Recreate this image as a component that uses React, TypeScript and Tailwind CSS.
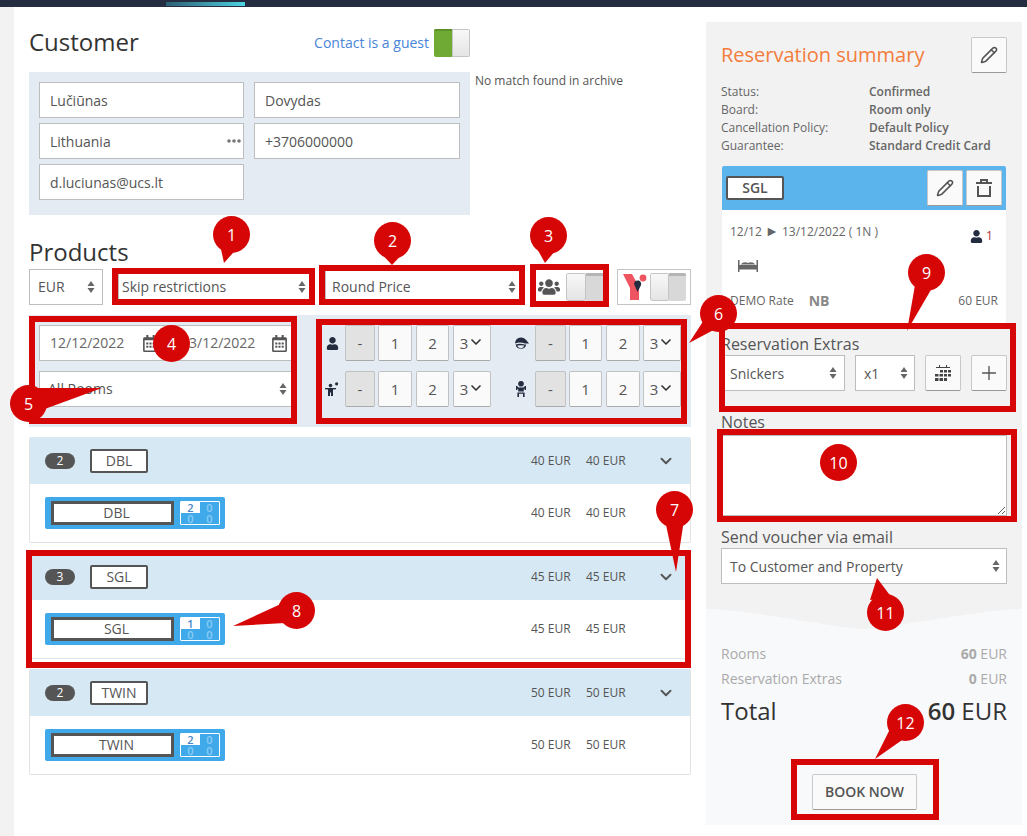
import React from 'react'
import {Pencil, Plus, ChevronDown} from 'lucide-react'
import {FaRegCalendarAlt, FaUser, FaUsers} from 'react-icons/fa'

const Arrows = () => (
    <svg width="8" height="14" viewBox="0 0 8 14" className="shrink-0 fill-[#666] -mt-px">
        <path d="M4 1 L7.5 6 H0.5 Z"/>
        <path d="M4 13 L7.5 8 H0.5 Z"/>
    </svg>
)

const Field = ({text}: {text: string}) => (
    <div className="h-9 bg-white border border-[#bdbdbd] pl-[10px] pt-px flex items-center text-sm text-[#555]">{text}</div>
)

const Select = ({text, className = ''}: {text: string; className?: string}) => (
    <div className={`h-9 bg-white border border-[#bdbdbd] flex items-center justify-between text-sm text-[#555] ${className}`}>
        <span>{text}</span>
        <Arrows/>
    </div>
)

const Toggle = ({className = ''}: {className?: string}) => (
    <div className={`h-[28px] flex rounded-[2px] overflow-hidden ${className}`}>
        <div className="flex-1 bg-gradient-to-b from-[#f8f8f8] to-[#e4e4e4] border border-[#c4c4c4] rounded-[2px]"/>
        <div className="flex-1 bg-[#d8d8d8] border-t-[3px] border-[#b5b5b5]"/>
    </div>
)

const CountButton = ({text, className = '', chevron = false}: {text: string; className?: string; chevron?: boolean}) => (
    <div className={`h-9 border border-[#c2c2c2] border-b-[#aaa] rounded-[2px] flex items-center justify-center text-[15px] text-[#555] ${className}`}>
        {text}
        {chevron && <ChevronDown size={16} strokeWidth={2.5} className="text-[#333] -mt-[2px]"/>}
    </div>
)

const CountRow = ({icon, wide = false}: {icon: React.ReactNode; wide?: boolean}) => (
    <div className="flex items-center">
        <div className={`w-[18px] flex justify-center ${wide ? 'mr-[5px]' : 'mr-[4px]'}`}>{icon}</div>
        <CountButton text="-" className={`bg-[#e2e2e2] border-[#aaa] ${wide ? 'w-[31px]' : 'w-[30px]'}`}/>
        <CountButton text="1" className={`bg-[#fafafa] ml-[3px] ${wide ? 'w-[33px]' : 'w-[34px]'}`}/>
        <CountButton text="2" className={`bg-[#fafafa] ml-[4px] ${wide ? 'w-[34px]' : 'w-[33px]'}`}/>
        <CountButton text="3" chevron className={`bg-[#fafafa] w-[38px] ${wide ? 'ml-[3px]' : 'ml-[4px]'}`}/>
    </div>
)

const CapIcon = () => (
    <svg width="15" height="15" viewBox="0 0 15 15" className="fill-[#232d3f]">
        <path d="M1 7.4 A6.2 6.2 0 0 1 12.2 4 L15 7.4 H11 Q6 5.6 1 7.4 Z"/>
        <path d="M1.6 8.4 Q6 7 10.6 8.4 L12.2 8.4 A5.4 5.4 0 0 1 1.6 8.4 Z M3.2 9.6 A3.8 3.8 0 0 0 10.4 9.6 Q6.8 8.8 3.2 9.6 Z" fillRule="evenodd"/>
    </svg>
)

const ChildIcon = () => (
    <svg width="14" height="14" viewBox="0 0 14 14" className="fill-[#232d3f]">
        <circle cx="5.5" cy="3.6" r="1.8"/>
        <circle cx="11.6" cy="1.8" r="1.6"/>
        <path d="M0 6 H11 V7.2 L8 7.6 V14 H6 V10.6 H5 V14 H3 V7.6 L0 7.2 Z"/>
    </svg>
)

const BabyIcon = () => (
    <svg width="10" height="16" viewBox="0 0 10 16" className="fill-[#232d3f]">
        <circle cx="5" cy="2.8" r="2.8"/>
        <path d="M0 5 L1 5 L2.6 6.4 H7.4 L9 5 L10 5 L10 9 H8.6 V7.6 L7.8 8 V10.6 H2.2 V8 L1.4 7.6 V9 H0 Z"/>
        <path d="M1.4 11.4 H8.6 V16 H7 V12.8 H3 V16 H1.4 Z"/>
    </svg>
)

const BedIcon = () => (
    <svg width="20" height="12" viewBox="0 0 20 12" className="block fill-[#666]">
        <path d="M0 0 H1.5 V5 H18.5 V0 H20 V12 H18.5 V9.5 H1.5 V12 H0 Z"/>
        <path d="M2.5 4.4 Q6 1.2 10 3 Q14 1.2 17.5 4.4 Z"/>
    </svg>
)

const TrashIcon = () => (
    <svg width="20" height="20" viewBox="0 0 20 20" fill="none" stroke="#555" strokeWidth="2">
        <path d="M2 5 H18"/>
        <path d="M7 5 V2 H13 V5"/>
        <path d="M4 8 V18 H16 V8"/>
    </svg>
)

const GridCalendarIcon = () => (
    <svg width="16" height="16" viewBox="0 0 16 16" className="fill-[#444]">
        <path d="M4 0 H5 V2 H11 V0 H12 V2 H15 V3 H1 V2 H4 Z"/>
        <path d="M5 5 H8 V7.5 H5 Z M9 5 H12 V7.5 H9 Z M13 5 H16 V7.5 H13 Z M0 9 H3.5 V11.5 H0 Z M4.5 9 H8 V11.5 H4.5 Z M9 9 H12 V11.5 H9 Z M13 9 H16 V11.5 H13 Z M0 13 H3.5 V16 H0 Z M4.5 13 H8 V16 H4.5 Z M9 13 H12 V16 H9 Z"/>
    </svg>
)

const YieldLogo = () => (
    <svg width="24" height="28" viewBox="0 0 24 28" className="shrink-0">
        <path d="M0 1 H9 L14 10 L16 14 V27 H7 V15 Z" fill="#ef5560"/>
        <path d="M11 11 A3.6 3.6 0 1 1 17.6 13 L14.5 19 Z" fill="#232d3f"/>
        <circle cx="20" cy="5" r="3.4" fill="#ef5560"/>
    </svg>
)

const RoomGroup = ({count, code, price, guests}: {count: string; code: string; price: string; guests: string}) => (
    <div className="h-[106px] border border-[#e3e3e3] border-t-0 rounded-[2px]">
        <div className="h-[47px] bg-[#d5e8f4] pl-[15px] pr-[15px] flex items-center text-xs text-[#555]">
            <div className="w-[30px] h-4 rounded-full bg-[#555] text-white flex items-center justify-center">{count}</div>
            <div className="w-[58px] h-6 ml-[15px] bg-white border-2 border-[#555] rounded-[2px] flex items-center justify-center text-sm">{code}</div>
            <div className="ml-auto w-10">{price} EUR</div>
            <div className="w-10 ml-[15px]">{price} EUR</div>
            <ChevronDown size={18} strokeWidth={2.5} className="ml-[31px] text-[#555]"/>
        </div>
        <div className="h-[58px] pl-[15px] pr-[15px] flex items-center text-xs text-[#555]">
            <div className="w-[180px] h-8 bg-[#3fa9ea] rounded-[2px] flex items-center pl-[6px]">
                <div className="w-[123px] h-6 bg-white border-[3px] border-[#555] pl-[8px] flex items-center justify-center text-sm">{code}</div>
                <div className="w-10 h-6 ml-[6px] border border-white rounded-[1px] grid grid-cols-2 grid-rows-2 text-[11px] leading-[11px] font-semibold text-[#8ccbf3]">
                    <div className="bg-white text-[#4a86c8] flex items-center justify-center">{guests}</div>
                    <div className="flex items-center justify-center">0</div>
                    <div className="flex items-center justify-center">0</div>
                    <div className="flex items-center justify-center">0</div>
                </div>
            </div>
            <div className="ml-auto w-10">{price} EUR</div>
            <div className="w-10 ml-[15px] mr-[49px]">{price} EUR</div>
        </div>
    </div>
)

const SummaryRow = ({label, value}: {label: string; value: string}) => (
    <div className="flex h-[18px] items-center text-xs text-[#666]">
        <div className="w-[148px]">{label}</div>
        <div className="font-semibold">{value}</div>
    </div>
)

const IconButton = ({children, className = ''}: {children: React.ReactNode; className?: string}) => (
    <div className={`w-9 h-9 bg-[#fafafa] border border-[#c8c8c8] border-b-[#999] rounded-[2px] flex items-center justify-center text-[#555] ${className}`}>{children}</div>
)

const boxes = [
    'left-[112px] top-[268px] w-[203px] h-[37px]',
    'left-[319px] top-[265px] w-[206px] h-[40px]',
    'left-[530px] top-[264px] w-[79px] h-[43px]',
    'left-[29px] top-[316px] w-[268px] h-[108px]',
    'left-[316px] top-[319px] w-[371px] h-[105px]',
    'left-[26px] top-[550px] w-[665px] h-[118px]',
    'left-[719px] top-[323px] w-[297px] h-[89px]',
    'left-[717px] top-[429px] w-[300px] h-[93px]',
    'left-[791px] top-[759px] w-[148px] h-[61px]',
]

const markers = [
    {n: '1', pos: 'left-[213px] top-[216px]', tail: '219,240 240,245 224,263'},
    {n: '2', pos: 'left-[374px] top-[222px]', tail: '378,250 406,250 392,265'},
    {n: '3', pos: 'left-[530px] top-[217px]', tail: '535,245 560,245 545,263'},
    {n: '4', pos: 'left-[153px] top-[325px]', tail: ''},
    {n: '5', pos: 'left-[10px] top-[385px]', tail: '30,388 42,410 102,388'},
    {n: '6', pos: 'left-[700px] top-[295px]', tail: '704,320 723,325 689,343'},
    {n: '7', pos: 'left-[656px] top-[491px]', tail: '665,520 684,520 676,572'},
    {n: '8', pos: 'left-[278px] top-[592px]', tail: '283,603 285,623 233,626'},
    {n: '9', pos: 'left-[908px] top-[254px]', tail: '915,285 932,288 907,331'},
    {n: '10', pos: 'left-[820px] top-[444px]', tail: ''},
    {n: '11', pos: 'left-[867px] top-[594px]', tail: '870,600 892,598 877,578'},
    {n: '12', pos: 'left-[887px] top-[704px]', tail: '892,725 905,738 875,759'},
]

const App = () => {
    return (
        <div className="relative w-[1027px] h-[836px] overflow-hidden bg-white font-['Open_Sans',sans-serif] text-[#333]">
            <div className="h-[7px] bg-[#232d3f] pt-[2px]">
                <div className="ml-[166px] w-[79px] h-1 bg-gradient-to-r from-[#2c5f74] to-[#4dd4e4]"/>
            </div>

            <div className="flex h-[829px]">
                <div className="w-[14px] bg-[#f2f2f2]"/>

                <main className="w-[677px] pl-[15px]">
                    <div className="w-[441px] h-8 mt-[20px] flex items-center">
                        <h1 className="text-2xl -mt-[2px]">Customer</h1>
                        <span className="ml-auto text-sm text-[#4a86d8]">Contact is a guest</span>
                        <div className="w-9 h-7 ml-[5px] flex rounded-[2px] overflow-hidden">
                            <div className="w-[18px] bg-[#6fab34] border-t-2 border-[#5d9229]"/>
                            <div className="w-[18px] bg-gradient-to-b from-[#f8f8f8] to-[#e4e4e4] border border-[#c4c4c4]"/>
                        </div>
                    </div>

                    <div className="flex mt-[13px]">
                        <div className="w-[441px] h-[143px] bg-[#e4ebf3] p-[10px] grid grid-cols-[205px_206px] gap-x-[10px] gap-y-[5px] content-start">
                            <Field text="Lučiūnas"/>
                            <Field text="Dovydas"/>
                            <div className="relative">
                                <Field text="Lithuania"/>
                                <svg width="14" height="4" viewBox="0 0 14 4" className="absolute right-[3px] top-[16px] fill-[#777]">
                                    <circle cx="2" cy="2" r="1.8"/>
                                    <circle cx="7" cy="2" r="1.8"/>
                                    <circle cx="12" cy="2" r="1.8"/>
                                </svg>
                            </div>
                            <Field text="+3706000000"/>
                            <Field text="d.luciunas@ucs.lt"/>
                        </div>
                        <div className="ml-[5px] text-xs leading-[18px] text-[#555]">No match found in archive</div>
                    </div>

                    <h2 className="text-2xl mt-[21px]">Products</h2>
                    <div className="flex mt-px">
                        <Select text="EUR" className="w-[74px] pl-[8px] pr-[7px]"/>
                        <Select text="Skip restrictions" className="w-[195px] ml-[15px] pl-[3px] pr-[6px]"/>
                        <Select text="Round Price" className="w-[198px] ml-[12px] pl-[6px] pr-[6px]"/>
                        <div className="flex items-center ml-[15px]">
                            <FaUsers size={22} className="text-[#555]"/>
                            <Toggle className="w-[38px] ml-[6px]"/>
                        </div>
                        <div className="ml-[13px] w-[74px] h-9 border border-[#c4c4c4] flex items-center pl-[5px] gap-[3px]">
                            <YieldLogo/>
                            <Toggle className="w-[36px]"/>
                        </div>
                    </div>

                    <div className="w-[662px] h-[112px] mt-[10px] bg-[#e4ebf3] p-[10px] flex">
                        <div className="w-[253px] flex flex-col gap-[10px]">
                            <div className="h-9 bg-white border border-[#bdbdbd] flex items-center text-sm text-[#666] pl-[10px]">
                                <span className="w-[92px]">12/12/2022</span>
                                <FaRegCalendarAlt size={17} className="text-[#555]"/>
                                <span className="w-[94px] ml-[22px]">13/12/2022</span>
                                <FaRegCalendarAlt size={17} className="text-[#555] ml-[-4px]"/>
                            </div>
                            <Select text="All Rooms" className="pl-[8px] pr-[4px]"/>
                        </div>
                        <div className="ml-[31px] flex flex-col gap-[10px]">
                            <div className="flex gap-[21px]">
                                <CountRow icon={<FaUser size={13} className="text-[#232d3f]"/>}/>
                                <CountRow wide icon={<CapIcon/>}/>
                            </div>
                            <div className="flex gap-[21px]">
                                <CountRow icon={<ChildIcon/>}/>
                                <CountRow wide icon={<BabyIcon/>}/>
                            </div>
                        </div>
                    </div>

                    <div className="w-[662px] mt-[10px] flex flex-col gap-[10px]">
                        <RoomGroup count="2" code="DBL" price="40" guests="2"/>
                        <RoomGroup count="3" code="SGL" price="45" guests="1"/>
                        <RoomGroup count="2" code="TWIN" price="50" guests="2"/>
                    </div>
                </main>

                <aside className="w-[316px] h-[803px] ml-[15px] mt-[15px] bg-[#f8f9fb]">
                    <div className="h-[587px] bg-[#f2f2f2] px-[15px] pt-[15px]">
                        <div className="flex items-center justify-between">
                            <h2 className="text-xl text-[#f47c3c]">Reservation summary</h2>
                            <IconButton><Pencil size={18}/></IconButton>
                        </div>
                        <div className="mt-[10px]">
                            <SummaryRow label="Status:" value="Confirmed"/>
                            <SummaryRow label="Board:" value="Room only"/>
                            <SummaryRow label="Cancellation Policy:" value="Default Policy"/>
                            <SummaryRow label="Guarantee:" value="Standard Credit Card"/>
                        </div>

                        <div className="w-[284px] h-[157px] ml-px mt-[11px] bg-white rounded-[2px] text-xs text-[#666]">
                            <div className="h-11 bg-[#5bb4ec] rounded-t-[2px] flex items-center pl-[4px] pr-[4px]">
                                <div className="w-[58px] h-6 bg-white border-2 border-[#555] rounded-[2px] flex items-center justify-center text-sm font-semibold text-[#555]">SGL</div>
                                <IconButton className="ml-auto"><Pencil size={18}/></IconButton>
                                <IconButton className="ml-[3px]"><TrashIcon/></IconButton>
                            </div>
                            <div className="pl-[8px] pr-[8px] pt-[13px]">
                                <div className="flex items-center h-[18px]">
                                    <span>12/12 <span className="text-sm leading-none">►</span> 13/12/2022 ( 1N )</span>
                                    <FaUser size={13} className="ml-auto text-[#232d3f] mt-[8px]"/>
                                    <span className="ml-[3px] w-[12px] text-[#a33] mt-[8px]">1</span>
                                </div>
                                <div className="ml-[8px] mt-[19px]"><BedIcon/></div>
                                <div className="flex items-center mt-[19px]">
                                    <span>DEMO Rate</span>
                                    <span className="ml-[15px] text-sm font-bold text-[#888]">NB</span>
                                    <span className="ml-auto">60 EUR</span>
                                </div>
                            </div>
                        </div>

                        <div className="text-base leading-5 text-[#555] mt-[11px]">Reservation Extras</div>
                        <div className="flex mt-px">
                            <Select text="Snickers" className="w-[124px] pl-[8px] pr-[7px] pt-px"/>
                            <Select text="x1" className="w-[60px] ml-[10px] pl-[8px] pr-[6px] pt-px"/>
                            <IconButton className="ml-[10px]"><GridCalendarIcon/></IconButton>
                            <IconButton className="ml-[10px]"><Plus size={22} strokeWidth={1.5}/></IconButton>
                        </div>
                        <div className="text-base leading-5 text-[#555] mt-[21px]">Notes</div>
                        <textarea readOnly className="block w-[286px] h-[81px] mt-[3px] bg-white border border-[#bdbdbd]"/>
                        <div className="text-base leading-5 text-[#555] mt-[11px]">Send voucher via email</div>
                        <Select text="To Customer and Property" className="w-[286px] mt-px pl-[8px] pr-[6px] pt-px"/>
                    </div>

                    <svg width="316" height="20" viewBox="0 0 316 20" className="block fill-[#f2f2f2]">
                        <path d="M0 0 H316 C 280 0 180 20 158 20 C 136 20 40 0 0 0 Z"/>
                    </svg>

                    <div className="px-[15px] pt-[15px]">
                        <div className="flex justify-between text-sm leading-5 text-[#aaa]">
                            <span>Rooms</span>
                            <span><b className="font-bold">60</b> EUR</span>
                        </div>
                        <div className="flex justify-between text-sm leading-5 text-[#aaa] mt-[5px]">
                            <span>Reservation Extras</span>
                            <span><b className="font-bold">0</b> EUR</span>
                        </div>
                        <div className="flex justify-between text-2xl mt-[6px]">
                            <span>Total</span>
                            <span><b className="font-semibold">60</b> EUR</span>
                        </div>
                        <div className="w-[105px] h-9 mt-[47px] ml-[91px] bg-[#fafafa] border border-[#c8c8c8] border-b-[#999] rounded-[2px] flex items-center justify-center text-sm font-semibold text-[#555]">BOOK NOW</div>
                    </div>
                </aside>
            </div>

            {/* numbered annotations drawn over the screenshot */}
            {boxes.map(b => (
                <div key={b} className={`absolute border-[6px] border-[#d60606] ${b}`}/>
            ))}
            <svg width="1027" height="836" className="absolute inset-0 fill-[#d60606]">
                {markers.filter(m => m.tail).map(m => <polygon key={m.n} points={m.tail}/>)}
            </svg>
            {markers.map(m => (
                <div key={m.n} className={`absolute w-[37px] h-[37px] rounded-full bg-[#d60606] text-white text-base flex items-center justify-center ${m.pos}`}>{m.n}</div>
            ))}
        </div>
    )
}

export default App
